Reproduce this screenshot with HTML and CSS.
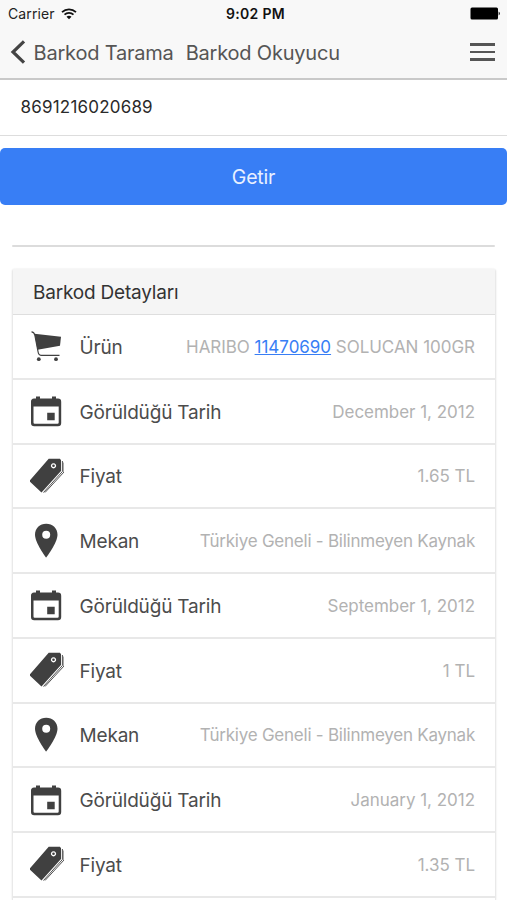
FILE: index.html
```html
<!DOCTYPE html>
<html lang="tr">
<head>
<meta charset="utf-8">
<title>Barkod Okuyucu</title>
<link rel="stylesheet" href="styles.css">
</head>
<body>
<svg class="defs" aria-hidden="true">
  <symbol id="cart" viewBox="0 -3 34 36">
    <path d="M4.500 2.800 31 5.800 30 14.800 7.500 18.800z"/>
    <path d="M1.500 .8C4 1 4.300 1.800 4.800 4L8 20.500C8.500 23.500 9 24.300 11 24.300H29.500" fill="none" stroke="currentColor" stroke-width="1.200"/>
    <circle cx="8.800" cy="28.200" r="1.900"/><circle cx="26" cy="28.200" r="1.900"/>
  </symbol>
  <symbol id="calendar" viewBox="0 -3 34 36">
    <path fill-rule="evenodd" d="M4 2.500H6V.5H10V2.500H22V.5H26V2.500H28a3.200 3.200 0 0 1 3.200 3.200V27a3.200 3.200 0 0 1-3.200 3.200H4.200A3.200 3.200 0 0 1 1 27V5.700A3.200 3.200 0 0 1 4 2.500zM3.500 10.500V26.500a1.200 1.200 0 0 0 1.200 1.200H27.500a1.200 1.200 0 0 0 1.200-1.200V10.500zM17.200 16.700H24.700V24.200H17.200z"/>
  </symbol>
  <symbol id="tags" viewBox="0 0 34 36">
    <path fill-rule="evenodd" d="M18.700.7H30L31 2.200V13L11.500 34.500-.700 23zM23.500 5.200a2.600 2.600 0 1 0 .01 0z"/>
    <circle cx="23.500" cy="7.800" r="1.300"/>
    <path d="M32.400 3V13.500L13.500 34.500M34 4.500V14L15 34.500" fill="none" stroke="currentColor" stroke-width=".9"/>
  </symbol>
  <symbol id="pin" viewBox="0 0 34 36">
    <path fill-rule="evenodd" d="M16.200.7C9.800.7 5 5.300 5 11.700 5 20 16.200 34.500 16.200 34.500S27.500 20 27.500 11.700C27.500 5.300 22.600.7 16.200.7zm0 7.100a4 4 0 1 1 0 8 4 4 0 0 1 0-8z"/>
  </symbol>
</svg>

<header class="header">
  <div class="status">
    <div class="carrier">Carrier
      <svg width="16" height="12" viewBox="0 0 16 12" fill="none" stroke="#111" stroke-width="1.700"><path d="M1 4.200C5 .3 11 .3 15 4.200M3.500 6.700C6 4.300 10 4.300 12.500 6.700"/><path d="M8 11.300 5.500 8.800C7 7.500 9 7.500 10.500 8.800z" fill="#111" stroke="none"/></svg>
    </div>
    <div class="clock">9:02 PM</div>
    <svg class="battery" width="31" height="13" viewBox="0 0 31 13"><rect x=".5" y=".5" width="27.500" height="12" rx="1.500"/><path d="M28.700 4.500Q31 6.500 28.700 8.500z"/></svg>
  </div>
  <nav class="navbar">
    <svg class="back" width="16" height="24" viewBox="0 0 16 24"><path d="M14 1.300 3 12 14 22.700" fill="none" stroke="currentColor" stroke-width="3.200"/></svg>
    <span class="back-label">Barkod Tarama</span>
    <h1 class="title">Barkod Okuyucu</h1>
    <div class="menu"><i></i><i></i><i></i></div>
  </nav>
</header>

<main>
  <div class="code">8691216020689</div>
  <button class="fetch">Getir</button>
  <div class="rule"></div>
  <section class="card">
    <h2 class="card-title">Barkod Detayları</h2>
    <div class="row"><svg class="icon"><use href="#cart"/></svg><span class="label">Ürün</span><span class="note">HARIBO <a href="#">11470690</a> SOLUCAN 100GR</span></div>
    <div class="row"><svg class="icon"><use href="#calendar"/></svg><span class="label">Görüldüğü Tarih</span><span class="note">December 1, 2012</span></div>
    <div class="row"><svg class="icon"><use href="#tags"/></svg><span class="label">Fiyat</span><span class="note">1.65 TL</span></div>
    <div class="row"><svg class="icon"><use href="#pin"/></svg><span class="label">Mekan</span><span class="note place">Türkiye Geneli - Bilinmeyen Kaynak</span></div>
    <div class="row"><svg class="icon"><use href="#calendar"/></svg><span class="label">Görüldüğü Tarih</span><span class="note">September 1, 2012</span></div>
    <div class="row"><svg class="icon"><use href="#tags"/></svg><span class="label">Fiyat</span><span class="note">1 TL</span></div>
    <div class="row"><svg class="icon"><use href="#pin"/></svg><span class="label">Mekan</span><span class="note place">Türkiye Geneli - Bilinmeyen Kaynak</span></div>
    <div class="row"><svg class="icon"><use href="#calendar"/></svg><span class="label">Görüldüğü Tarih</span><span class="note">January 1, 2012</span></div>
    <div class="row"><svg class="icon"><use href="#tags"/></svg><span class="label">Fiyat</span><span class="note">1.35 TL</span></div>
  </section>
</main>
</body>
</html>
```
FILE: styles.css
```css
* { box-sizing: border-box; }
body {
  display: flex;
  flex-direction: column;
  margin: 0;
  height: 900px;
  overflow: hidden;
  background: #fff;
  color: #444;
  font-family: Inter, "Liberation Sans", sans-serif;
}
main { display: flex; flex: 1; flex-direction: column; min-height: 0; }
.defs { display: none; }
.header {
  flex: none;
  height: 80px;
  background: #f8f8f8;
  border-bottom: 2px solid #c9c9c9;
}
.status {
  display: grid;
  grid-template-columns: 1fr auto 1fr;
  align-items: center;
  height: 27px;
  padding: 0 6px 0 8px;
  font-size: 14px;
  color: #222;
}
.carrier { display: flex; align-items: center; gap: 6px; letter-spacing: .1px; }
.clock { padding-left: 2px; font-weight: 600; color: #111; letter-spacing: .3px; }
.battery { justify-self: end; fill: #000; }
.navbar {
  display: flex;
  align-items: center;
  height: 50px;
  padding: 0 12px 0 10px;
  font-size: 20px;
  letter-spacing: -.2px;
}
.back { margin-right: 7.500px; color: #444; }
.back-label, .title { padding-top: 1px; color: #555; white-space: nowrap; }
.title { margin: 0 0 0 12px; font-size: 20px; font-weight: 400; letter-spacing: -.2px; }
.menu { display: grid; gap: 5px; width: 25px; margin-left: auto; }
.menu i { height: 2.500px; background: #555; }
.code {
  flex: none;
  height: 56px;
  padding-left: 20.500px;
  border-bottom: 1px solid #ddd;
  font-size: 17px;
  letter-spacing: .2px;
  line-height: 55px;
  color: #2a2a2a;
}
.fetch {
  flex: none;
  width: 100%;
  height: 57px;
  margin: 12px 0 40px;
  padding: 0;
  border: 0;
  border-radius: 5px;
  background: #387ef5;
  color: #e8f0ff;
  font: 400 19.500px Inter, sans-serif;
  letter-spacing: -.2px;
}
.rule { flex: none; height: 2px; margin: 0 12px 22px; background: #dcdcdc; border-radius: 1px; }
.card {
  flex: 1;
  margin: 0 11px 0 12px;
  border: solid #e9e9e9;
  border-width: 0 1px;
  border-radius: 3px 3px 0 0;
  box-shadow: 0 0 2px rgba(0, 0, 0, .12);
}
.card-title {
  height: 46px;
  margin: 0;
  padding-left: 20px;
  background: #f5f5f5;
  border-bottom: 1px solid #dedede;
  font-size: 19px;
  font-weight: 400;
  letter-spacing: -.2px;
  line-height: 48px;
  color: #333;
}
.row {
  display: flex;
  align-items: center;
  height: 64.750px;
  padding: 0 20px 0 17px;
  border-bottom: 2px solid #e8e8e8;
}
.icon { width: 34px; height: 36px; margin-right: 15.500px; fill: currentColor; color: #404040; overflow: visible; }
.label { padding-top: 2px; font-size: 19px; letter-spacing: -.18px; color: #4c4c4c; white-space: nowrap; }
.note { margin-left: auto; padding-top: 1px; font-size: 17px; letter-spacing: -.03px; color: #b2b2b2; white-space: nowrap; }
.place { letter-spacing: -.24px; }
.note a { color: #387ef5; }
```
